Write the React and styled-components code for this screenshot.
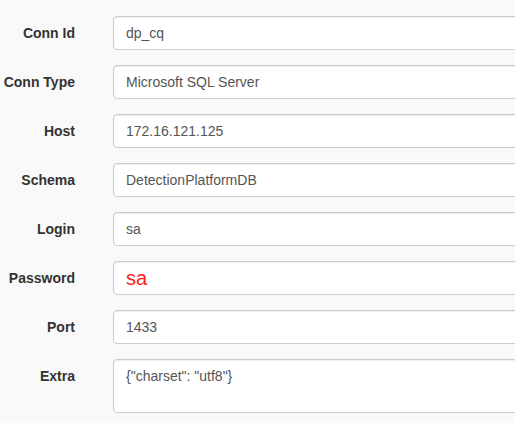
import React from 'react'
import styled, { createGlobalStyle } from 'styled-components'

const GlobalStyle = createGlobalStyle`
  html, body {
    margin: 0;
    padding: 0;
    background: #f9f9f9;
    overflow: hidden;
  }
  body {
    font-family: "Liberation Sans", Arial, sans-serif;
    font-size: 14px;
    color: #333;
  }
`

const Form = styled.form`
  display: flex;
  flex-direction: column;
  gap: 15px;
  padding-top: 16px;
  width: 640px;
`

const Row = styled.div`
  display: grid;
  grid-template-columns: 75px 1fr;
  column-gap: 38px;
  align-items: start;
`

const Label = styled.label`
  text-align: right;
  font-weight: bold;
  font-size: 14px;
  line-height: 20px;
  padding-top: 7px;
  color: #333;
`

const Input = styled.input`
  box-sizing: border-box;
  height: 34px;
  width: 100%;
  padding: 6px 12px;
  font-family: "Liberation Sans", Arial, sans-serif;
  font-size: ${p => (p.$big ? '20px' : '14px')};
  color: ${p => (p.$red ? '#ff1a1a' : '#555')};
  background: #fff;
  border: 1px solid #ccc;
  border-radius: 4px;
  box-shadow: inset 0 1px 1px rgba(0, 0, 0, 0.075);
  outline: none;
`

const TextArea = styled.textarea`
  box-sizing: border-box;
  height: 54px;
  width: 100%;
  padding: 6px 12px;
  font-family: "Liberation Sans", Arial, sans-serif;
  font-size: 14px;
  line-height: 20px;
  color: #555;
  background: #fff;
  border: 1px solid #ccc;
  border-radius: 4px;
  box-shadow: inset 0 1px 1px rgba(0, 0, 0, 0.075);
  resize: none;
  outline: none;
`

const fields = [
  { label: 'Conn Id', value: 'dp_cq' },
  { label: 'Conn Type', value: 'Microsoft SQL Server' },
  { label: 'Host', value: '172.16.121.125' },
  { label: 'Schema', value: 'DetectionPlatformDB' },
  { label: 'Login', value: 'sa' },
  { label: 'Password', value: 'sa', password: true },
  { label: 'Port', value: '1433' },
]

const App = () => (
  <>
    <GlobalStyle />
    <Form>
      {fields.map(f => (
        <Row key={f.label}>
          <Label>{f.label}</Label>
          <Input
            readOnly
            value={f.value}
            $big={f.password}
            $red={f.password}
          />
        </Row>
      ))}
      <Row>
        <Label>Extra</Label>
        <TextArea readOnly value={'{"charset": "utf8"}'} />
      </Row>
    </Form>
  </>
)

export default App
